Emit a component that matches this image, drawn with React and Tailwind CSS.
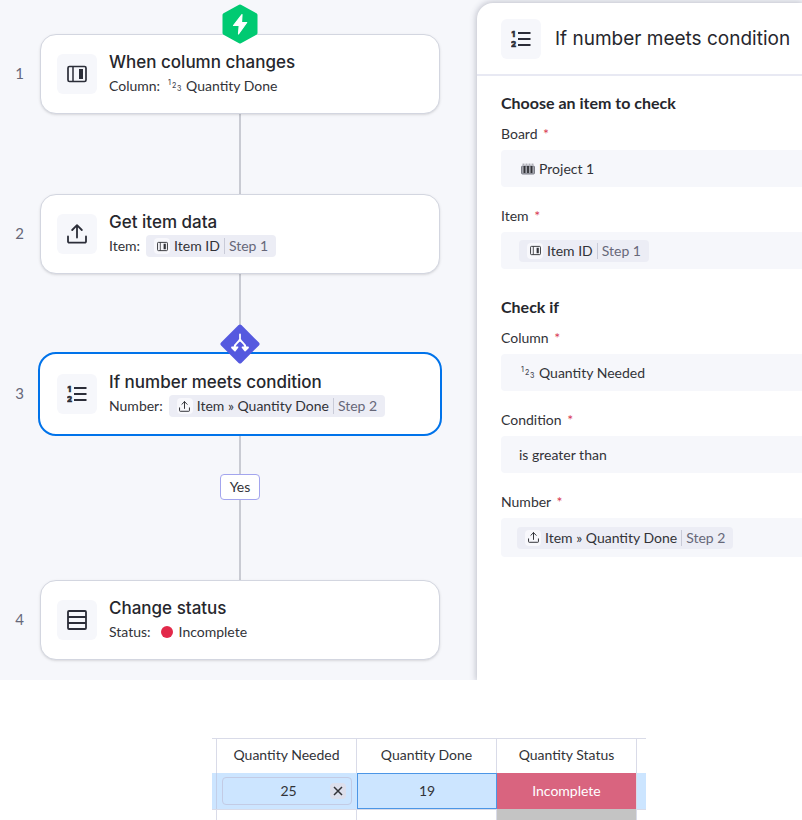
import { useState } from 'react';

function ColumnIcon({ size = 20 }) {
  return (
    <svg width={size} height={size} viewBox="0 0 20 20" fill="none" stroke="currentColor" aria-hidden="true">
      <rect x="1" y="2.5" width="18" height="15" rx="1.5" strokeWidth="1.7" />
      <path d="M6 2.5v15" strokeWidth="1.5" />
      <path d="M14 5v10" strokeWidth="4" />
    </svg>
  );
}

function UploadIcon({ size = 20 }) {
  return (
    <svg width={size} height={size} viewBox="0 0 20 20" fill="none" stroke="currentColor" strokeWidth="1.8" strokeLinecap="round" strokeLinejoin="round" aria-hidden="true">
      <path d="M1 12.5v5a1.2 1.2 0 0 0 1.2 1.2h15.6a1.2 1.2 0 0 0 1.2-1.2v-5" />
      <path d="M10 13.5V1.2M5.2 6 10 1.2 14.8 6" />
    </svg>
  );
}

function NumberedListIcon() {
  return (
    <svg width="20" height="20" viewBox="0 0 20 20" aria-hidden="true">
      <path d="M7 4h12.5M7 10h12.5M7 16h12.5" stroke="currentColor" strokeWidth="1.8" />
      <g fill="currentColor" stroke="currentColor" strokeWidth="0.6" fontFamily="Inter, sans-serif" fontSize="8" fontWeight="800" textAnchor="middle">
        <text x="2.3" y="8">1</text>
        <text x="2.5" y="17.5">2</text>
      </g>
    </svg>
  );
}

function RowsIcon() {
  return (
    <svg width="20" height="20" viewBox="0 0 20 20" fill="none" stroke="currentColor" strokeWidth="1.8" aria-hidden="true">
      <rect x="1" y="1" width="18" height="18" rx="1" />
      <path d="M1 7h18M1 13h18" />
    </svg>
  );
}

function BoardIcon() {
  return (
    <svg width="14" height="12" viewBox="0 0 14 12" fill="none" stroke="#4b4d58" aria-hidden="true">
      <path d="M1.5 1.2h11" strokeDasharray="2 1" opacity="0.6" />
      <rect x="0.5" y="3" width="13" height="8" rx="1" fill="#a4a6ae" stroke="#7d7f89" />
      <path d="M3.5 3v7M7 3v7M10.5 3v7" stroke="#323338" strokeWidth="1.8" />
    </svg>
  );
}

function DigitsIcon() {
  return (
    <svg width="14" height="14" viewBox="0 0 14 14" fill="#4b4d58" fontFamily="Inter, sans-serif" fontSize="7" fontWeight="500" aria-hidden="true">
      <text x="0" y="6">1</text>
      <text x="4" y="9">2</text>
      <text x="9" y="12">3</text>
    </svg>
  );
}

function TriggerBadge() {
  return (
    <svg className="absolute -top-[31px] left-1/2 -translate-x-1/2" width="36" height="40" viewBox="0 0 36 40" aria-hidden="true">
      <path d="M18 2.5 33.5 11v18L18 37.5 2.5 29V11Z" fill="#00ca72" stroke="#00ca72" strokeWidth="4" strokeLinejoin="round" />
      <path d="M20 10.5 11.5 21.5h5.7L16.5 30l8.200-11.500h-5.200Z" fill="#fff" stroke="#fff" strokeWidth="1.2" strokeLinejoin="round" />
    </svg>
  );
}

function BranchBadge() {
  return (
    <svg className="absolute -top-[31px] left-1/2 -translate-x-1/2" width="40" height="40" viewBox="0 0 40 40" aria-hidden="true">
      <path d="M20 2.5 37.5 20 20 37.5 2.5 20Z" fill="#5559df" stroke="#5559df" strokeWidth="4" strokeLinejoin="round" />
      <g fill="none" stroke="#fff" strokeWidth="1.8" strokeLinecap="round" strokeLinejoin="round">
        <path d="M20 10.500v4.500M20 15c-.5 3.500-5.500 4-5.500 8.500M20 15c.5 3.500 5.500 4 5.500 8.500" />
        <path d="m12 23.500 3 3 2.500-3.200ZM22.500 23.300l2.500 3.200 3-3Z" fill="#fff" />
      </g>
    </svg>
  );
}

function IconTile({ children }) {
  return (
    <div className="flex size-10 shrink-0 items-center justify-center rounded-md bg-[#f6f7fb] text-[#2b2d38]">
      {children}
    </div>
  );
}

function Chip({ icon, label, step }) {
  return (
    <span className="inline-flex h-[22px] items-center rounded bg-[#ecedf5] px-2 whitespace-nowrap">
      <span className="mr-1 flex size-4 items-center justify-center rounded bg-[#f8f8fc]">{icon}</span>
      <span>{label}</span>
      <span className="mx-1 h-4 w-px bg-[#c9cbd8]" />
      <span className="text-[#676879]">{step}</span>
    </span>
  );
}

function Step({ number, title, icon, badge, selected, children }) {
  return (
    <div className="flex items-center">
      <span className="mr-4 w-6 pb-0.5 text-right text-[15px] text-[#676879]">{number}</span>
      <div
        className={
          selected
            ? 'relative flex h-20 flex-1 items-center gap-3 rounded-2xl border border-white bg-white px-4 outline-2 outline-[#0073ea]'
            : 'relative flex h-20 flex-1 items-center gap-3 rounded-2xl border border-[#d3d6e0] bg-white px-4 shadow-sm'
        }
      >
        {badge}
        <IconTile>{icon}</IconTile>
        <div>
          <h2 className="font-['Inter'] text-[17px] leading-6 font-medium text-[#26272d]">{title}</h2>
          <div className="flex h-6 items-center text-sm">{children}</div>
        </div>
      </div>
    </div>
  );
}

function Connector({ short }) {
  return (
    <div className="pl-10">
      <div className={short ? 'mx-auto h-10 w-[2px] bg-[#c9cbd3]' : 'mx-auto h-20 w-[2px] bg-[#c9cbd3]'} />
    </div>
  );
}

function Label({ htmlFor, children }) {
  return (
    <label htmlFor={htmlFor} className="mb-1.5 block text-sm leading-5">
      {children} <span className="ml-0.5 text-[#d83a52]">*</span>
    </label>
  );
}

function SelectField({ id, label, icon, options }) {
  return (
    <div>
      <Label htmlFor={id}>{label}</Label>
      <div className="flex h-[37px] items-center gap-1 rounded-l bg-[#f6f7fb] pl-[18px]">
        {icon}
        <select id={id} className="h-full flex-1 appearance-none bg-transparent text-sm outline-none">
          {options.map(o => (
            <option key={o}>{o}</option>
          ))}
        </select>
      </div>
    </div>
  );
}

function FlowPanel() {
  return (
    <section className="pt-[34px] pr-[37px] pb-5">
      <Step number={1} title="When column changes" icon={<ColumnIcon />} badge={<TriggerBadge />}>
        <span className="mr-2">Column:</span>
        <DigitsIcon />
        <span className="ml-1">Quantity Done</span>
      </Step>
      <Connector />
      <Step number={2} title="Get item data" icon={<UploadIcon />}>
        <span className="mr-1.5">Item:</span>
        <Chip icon={<ColumnIcon size={11} />} label="Item ID" step="Step 1" />
      </Step>
      <Connector />
      <Step number={3} title="If number meets condition" icon={<NumberedListIcon />} badge={<BranchBadge />} selected>
        <span className="mr-1.5">Number:</span>
        <Chip icon={<UploadIcon size={11} />} label="Item » Quantity Done" step="Step 2" />
      </Step>
      <Connector short />
      <div className="flex justify-center pl-10">
        <button type="button" className="h-[26px] w-10 rounded border border-[#a3a5ee] bg-white text-sm">Yes</button>
      </div>
      <Connector />
      <Step number={4} title="Change status" icon={<RowsIcon />}>
        <span className="mr-2.5">Status:</span>
        <span className="mr-1.5 size-3 rounded-full bg-[#e2294a]" />
        <span>Incomplete</span>
      </Step>
    </section>
  );
}

function ConditionPanel() {
  return (
    <section className="mt-[3px] rounded-tl-2xl bg-white shadow-[0_0_6px_1px_rgba(60,64,90,0.3)]">
      <header className="flex items-center gap-3.5 border-b-2 border-[#e8e9f3] pt-4 pb-[15px] pl-6">
        <IconTile><NumberedListIcon /></IconTile>
        <h1 className="font-['Inter'] text-[19px] whitespace-nowrap text-[#26272d]">If number meets condition</h1>
      </header>
      <div className="pt-[17px] pl-6">
        <h3 className="mb-[11px] text-base leading-5 font-bold text-[#26272d]">Choose an item to check</h3>
        <div className="space-y-[19px]">
          <SelectField id="board" label="Board" icon={<span className="ml-0.5"><BoardIcon /></span>} options={['Project 1', 'Project 2']} />
          <div>
            <Label htmlFor="item">Item</Label>
            <button id="item" type="button" className="flex h-[37px] w-full items-center rounded-l bg-[#f6f7fb] pl-[18px] text-sm">
              <Chip icon={<ColumnIcon size={11} />} label="Item ID" step="Step 1" />
            </button>
          </div>
        </div>
        <h3 className="mt-7 mb-[11px] text-base leading-5 font-bold text-[#26272d]">Check if</h3>
        <div className="space-y-[19px]">
          <SelectField id="column" label="Column" icon={<span className="ml-0.5"><DigitsIcon /></span>} options={['Quantity Needed', 'Quantity Done']} />
          <SelectField id="condition" label="Condition" options={['is greater than', 'is less than', 'is equal to']} />
          <div>
            <Label htmlFor="number">Number</Label>
            <button id="number" type="button" className="flex h-[39px] w-full items-center rounded-l bg-[#f6f7fb] pl-4 text-sm">
              <Chip icon={<UploadIcon size={11} />} label="Item » Quantity Done" step="Step 2" />
            </button>
          </div>
        </div>
      </div>
    </section>
  );
}

function QuantityTable() {
  const [needed, setNeeded] = useState('25');

  return (
    <div className="mt-[58px] flex justify-center overflow-hidden pl-14">
      <table className="w-[434px] table-fixed border-separate border-spacing-0 text-center text-sm">
        <colgroup>
          <col className="w-[5px]" />
          <col className="w-[140px]" />
          <col className="w-[140px]" />
          <col className="w-[140px]" />
          <col className="w-[9px]" />
        </colgroup>
        <thead>
          <tr className="h-[35px]">
            <td className="border-t border-r border-[#d9dbe8] p-0" />
            <th className="border-t border-r border-[#d9dbe8] p-0 pb-0.5 font-normal">Quantity Needed</th>
            <th className="border-t border-r border-[#d9dbe8] p-0 pb-0.5 font-normal">Quantity Done</th>
            <th className="border-t border-r border-[#d9dbe8] p-0 pb-0.5 font-normal">Quantity Status</th>
            <td className="border-t border-[#d9dbe8] p-0" />
          </tr>
        </thead>
        <tbody>
          <tr className="h-9 bg-[#cce5ff]">
            <td className="border-r border-[#c3cfe8] p-0" />
            <td className="p-0">
              <div className="mx-[5px] flex h-7 items-center rounded border border-[#c3cbe4] pr-[5px]">
                <input
                  aria-label="Quantity Needed"
                  value={needed}
                  onChange={e => setNeeded(e.target.value)}
                  className="w-full min-w-0 bg-transparent pl-6 text-center outline-none"
                />
                <button type="button" aria-label="Clear" onClick={() => setNeeded('')} className="flex size-4 shrink-0 items-center justify-center rounded bg-[#dcdfec]">
                  <svg width="10" height="10" viewBox="0 0 10 10" stroke="#323338" strokeWidth="1.5" aria-hidden="true">
                    <path d="m1 1 8 8M9 1 1 9" />
                  </svg>
                </button>
              </div>
            </td>
            <td className="border border-[#4c96e6] p-0">19</td>
            <td className="border-r border-[#d9dbe8] bg-[#d9647f] p-0 text-white">Incomplete</td>
            <td className="p-0" />
          </tr>
          <tr className="h-[11px]">
            <td className="border-t border-r border-[#d9dbe8] p-0" />
            <td className="border-t border-r border-[#d9dbe8] p-0" />
            <td className="border-t border-r border-[#d9dbe8] p-0" />
            <td className="border-r border-[#d9dbe8] bg-[#c4c4c4] p-0" />
            <td className="border-t border-[#d9dbe8] p-0" />
          </tr>
        </tbody>
      </table>
    </div>
  );
}

export default function App() {
  return (
    <main className="bg-white font-['Lato',sans-serif] text-[#323338]">
      <div className="grid grid-cols-[477fr_325fr] overflow-hidden bg-[#f6f7fb]">
        <FlowPanel />
        <ConditionPanel />
      </div>
      <QuantityTable />
    </main>
  );
}
